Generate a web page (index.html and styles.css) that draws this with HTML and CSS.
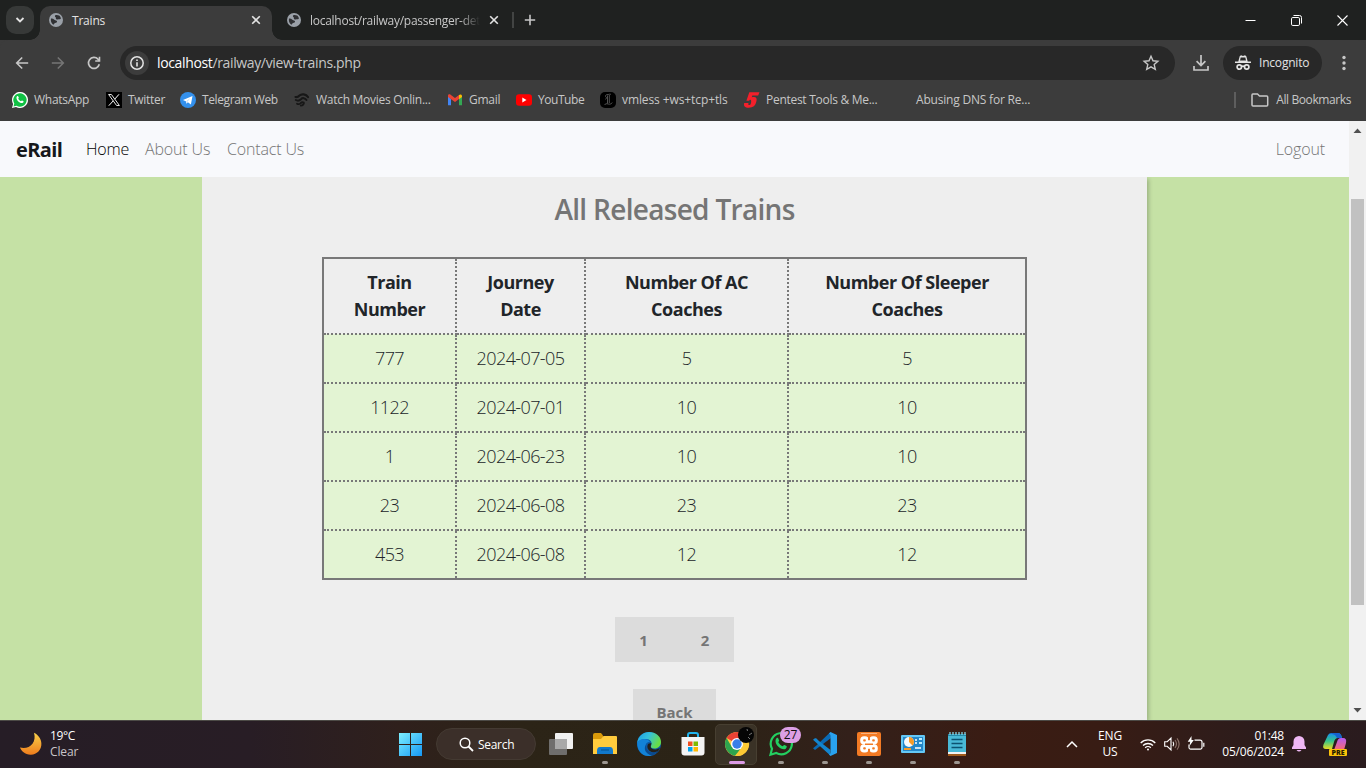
FILE: index.html
```html
<!DOCTYPE html>
<html lang="en">
<head>
<meta charset="utf-8">
<title>Trains</title>
<link rel="stylesheet" href="styles.css">
</head>
<body>
<svg width="0" height="0" class="defs">
  <symbol id="globe" viewBox="0 0 14 14"><circle cx="7" cy="7" r="7" fill="#9aa0a8"/><path d="M2 5.600c1.300-.2 2.400.3 3.400 1.200 1.200.8 2.200.4 2.600 1.500.3 1-.8 1.500-1.900 1.800-.8.300-.9 1.200-1.800 1.600C2.400 10.500 1.400 8 2 5.600zM6.300 2.200c1-.5 2.600-.4 3.800.4.900.7 1.600 1.700 1.800 2.900-.5 1-1.500.5-2.400.8-1 .2-1.600.4-2.400-.3-.6-.6.2-1.300-.5-1.700-.7-.5-1-1.600-.3-2.100z" fill="#303134"/></symbol>
  <symbol id="cross" viewBox="0 0 10 10"><path d="M1.200 1.200l7.600 7.600M8.800 1.200L1.200 8.800" stroke="currentColor" stroke-width="1.600" fill="none"/></symbol>
</svg>

<header class="tabstrip">
  <button class="tab-search"><svg width="10" height="10" viewBox="0 0 10 10"><path d="M1.500 3L5 6.500 8.500 3" fill="none" stroke="#e3e3e3" stroke-width="1.800"/></svg></button>
  <div class="tab tab-active">
    <svg width="14" height="14"><use href="#globe"/></svg><span class="tab-title">Trains</span><svg class="tab-close" width="10" height="10"><use href="#cross"/></svg>
  </div>
  <div class="tab">
    <svg width="14" height="14"><use href="#globe"/></svg><span class="tab-title tab-fade">localhost/railway/passenger-det</span><svg class="tab-close" width="10" height="10"><use href="#cross"/></svg>
  </div>
  <i class="tab-rule"></i>
  <svg class="new-tab" width="12" height="12" viewBox="0 0 12 12"><path d="M6 .8v10.400M.8 6h10.400" stroke="#c7c7c7" stroke-width="1.600"/></svg>
  <div class="window-buttons">
    <svg width="11" height="11" viewBox="0 0 11 11"><path d="M.5 5.500h10" stroke="#fff"/></svg>
    <svg width="11" height="11" viewBox="0 0 11 11" fill="none" stroke="#fff"><rect x=".5" y="2.500" width="8" height="8" rx="1.300"/><path d="M2.500.500h6a2 2 0 0 1 2 2v6"/></svg>
    <svg width="11" height="11" viewBox="0 0 11 11"><path d="M.5.500l10 10M10.500.500l-10 10" stroke="#fff" stroke-width="1.100"/></svg>
  </div>
</header>

<div class="toolbar">
  <div class="nav-buttons">
    <svg width="14" height="14" viewBox="0 0 14 14"><path d="M13.200 7H2M7.200 1.500L1.700 7l5.500 5.500" fill="none" stroke="#c7c7c7" stroke-width="1.600"/></svg>
    <svg width="14" height="14" viewBox="0 0 14 14"><path d="M.8 7H12M6.800 1.500L12.300 7l-5.500 5.500" fill="none" stroke="#757575" stroke-width="1.600"/></svg>
    <svg width="14" height="14" viewBox="0 0 14 14"><path d="M12.300 8.300A5.500 5.500 0 1 1 11 3.200l1.500 1.700" fill="none" stroke="#c7c7c7" stroke-width="1.700"/><path d="M13.300.8v5H8.200V4.300h3.500V.8z" fill="#c7c7c7"/></svg>
  </div>
  <div class="omnibox">
    <span class="site-info"><svg width="14" height="14" viewBox="0 0 14 14"><circle cx="7" cy="7" r="6.200" fill="none" stroke="#e3e3e3" stroke-width="1.500"/><path d="M7 6.200v4.200M7 3.500v1.500" stroke="#e3e3e3" stroke-width="1.600"/></svg></span>
    <span class="url"><b>localhost</b>/railway/view-trains.php</span>
    <svg class="star" width="16" height="16" viewBox="0 0 16 16"><path d="M8 1.300l2 4.500 4.900.5-3.700 3.300 1.100 4.800L8 11.900l-4.300 2.500 1.100-4.800L1.100 6.300 6 5.800z" fill="none" stroke="#c7c7c7" stroke-width="1.400"/></svg>
  </div>
  <svg class="download" width="16" height="16" viewBox="0 0 16 16" fill="none" stroke="#c7c7c7" stroke-width="1.700"><path d="M8 0v10.500M3.600 6.200L8 10.600l4.400-4.400M1 11v4h14v-4"/></svg>
  <div class="incognito"><svg width="16" height="16" viewBox="0 0 16 16"><path d="M4.700 1.300L6 .3l2 .7 2-.7 1.300 1 1.400 5.200H16V8H0V6.500h3.300z" fill="#e3e3e3"/><path d="M5.700 2.500L5 5.500h6l-.7-3z" fill="#282828"/><g fill="none" stroke="#e3e3e3" stroke-width="1.700"><circle cx="4.300" cy="12" r="2.200"/><circle cx="11.700" cy="12" r="2.200"/><path d="M6.400 11.600q1.600-1 3.200 0"/></g></svg><span>Incognito</span></div>
  <svg class="menu-dots" width="4" height="16" viewBox="0 0 4 16" fill="#c7c7c7"><circle cx="2" cy="2.500" r="1.700"/><circle cx="2" cy="8" r="1.700"/><circle cx="2" cy="13.500" r="1.700"/></svg>
</div>

<nav class="bookmarks">
  <a><svg width="16" height="16" viewBox="0 0 16 16"><path d="M0 16l1.100-4A8 8 0 1 1 4 14.900z" fill="#fff"/><path d="M1.500 14.500l.8-2.900a6.700 6.700 0 1 1 2.300 2.200z" fill="#10c044"/><path d="M5 4.300c.5-.5 1.100-.3 1.300.2l.5 1.200c.1.400-.5.800-.6 1.100.7 1.300 1.500 2 2.800 2.500.4-.2.700-.9 1.100-.8l1.400.7c.3.300-.1 1.300-.7 1.600-1.300.7-3.200-.1-4.700-1.600C4.500 7.700 3.900 5.500 5 4.300z" fill="#fff"/></svg><span>WhatsApp</span></a>
  <a><svg width="16" height="16" viewBox="0 0 16 16"><path fill="#000" d="M0 0h16v16H0z"/><path d="M2.600 2.500h2.800l8 11h-2.800z" fill="none" stroke="#fff" stroke-width=".9"/><path d="M13 2.300L8.700 7.200M7.300 8.800L2.800 13.700" stroke="#fff"/></svg><span>Twitter</span></a>
  <a><svg width="16" height="16" viewBox="0 0 16 16"><circle cx="8" cy="8" r="8" fill="#3390ec"/><path d="M3 7.900l9.500-4-1.600 8.500-3-2.100-1.700 1.500V9.500z" fill="#fff"/><path d="M6.300 9.200l4-3.200-2.800 3.800z" fill="#b8dcfa"/></svg><span>Telegram Web</span></a>
  <a><svg width="16" height="16" viewBox="0 0 16 16" fill="none" stroke="#171717" stroke-linecap="round"><path d="M14 5C12 2 7.500 1.500 5.500 3.500 4.300 4.800 3 5.200 1.500 5" stroke-width="2.200"/><path d="M12.500 8C11 5.700 8.500 5.600 7 7.200 5.500 8.700 3.500 9 1.800 8" stroke-width="2"/><path d="M9.500 10.500c-1.500-.8-2.200 0-3 .8-1 1-2.300 1-3.500.4M9.800 10.500c.5 1.500-1 3-3 3.200" stroke-width="1.800"/></svg><span>Watch Movies Onlin...</span></a>
  <a><svg width="16" height="16" viewBox="0 0 16 16"><path d="M1 4v9.300h3V7z" fill="#4285f4"/><path d="M15 4v9.300h-3V7z" fill="#34a853"/><path d="M1 3.500C1 2.200 2.700 2 3.600 2.700L8 6l4-3v4L8 10 1 5z" fill="#ea4335"/><path d="M12 3c1-1 3-.8 3 1v1l-3 2.200z" fill="#fbbc04"/></svg><span>Gmail</span></a>
  <a><svg width="16" height="16" viewBox="0 0 16 16"><rect y="2.300" width="16" height="11.500" rx="3" fill="#f00"/><path d="M6.300 5.500v5L10.500 8z" fill="#fff"/></svg><span>YouTube</span></a>
  <a><svg width="16" height="16" viewBox="0 0 16 16"><rect width="16" height="16" rx="5" fill="#000"/><path d="M11 2.500c-1-.8-2 0-3 0C6 2.400 4.500 4 6 5c1 .8.300 2-.7 2.300M7.500 3.500v8M9.300 3v8M4.500 13c2-3 4 .5 7-1.500l.7-1" fill="none" stroke="#666" stroke-width=".8"/></svg><span>vmless +ws+tcp+tls</span></a>
  <a><svg width="16" height="16" viewBox="0 0 16 16"><path d="M5.300.2h10.200l-1.300 3.300H8.300L7.800 5.300C12 4.300 13.300 6 12.400 9.300c-1 4.600-3.200 6.400-7.700 6.400-3.800 0-5.300-1.500-4.500-4.700h4.300c-.5 2 .2 2.300 1.300 2 1.400-.5 2-5.200.6-5.300-.7 0-1 .5-1.300 1H2.400z" fill="#f3202b"/></svg><span>Pentest Tools &amp; Me...</span></a>
  <a><i class="no-icon"></i><span>Abusing DNS for Re...</span></a>
  <div class="all-bookmarks"><svg width="18" height="14" viewBox="0 0 18 14"><path d="M1.800 1h4.700l2 2h7.200q1 0 1 1v8q0 1-1 1H2q-1 0-1-1V2q0-1 .8-1z" fill="none" stroke="#c7c7c7" stroke-width="1.500"/></svg><span>All Bookmarks</span></div>
</nav>

<div class="viewport">
  <div class="page">
    <nav class="navbar"><a class="brand">eRail</a><a class="current">Home</a><a class="about">About Us</a><a class="contact">Contact Us</a><a class="logout">Logout</a></nav>
    <main class="panel">
      <h1>All Released Trains</h1>
      <table>
        <colgroup><col class="c1"><col class="c2"><col class="c3"><col class="c4"></colgroup>
        <tr><th>Train<br>Number</th><th>Journey<br>Date</th><th>Number Of AC<br>Coaches</th><th>Number Of Sleeper<br>Coaches</th></tr>
        <tr><td>777</td><td>2024-07-05</td><td>5</td><td>5</td></tr>
        <tr><td>1122</td><td>2024-07-01</td><td>10</td><td>10</td></tr>
        <tr><td>1</td><td>2024-06-23</td><td>10</td><td>10</td></tr>
        <tr><td>23</td><td>2024-06-08</td><td>23</td><td>23</td></tr>
        <tr><td>453</td><td>2024-06-08</td><td>12</td><td>12</td></tr>
      </table>
      <div class="pager"><a>1</a><a>2</a></div>
      <a class="back">Back</a>
    </main>
  </div>
  <div class="scrollbar"><svg width="9" height="5" viewBox="0 0 9 5"><path d="M.5 5L4.500.500l4 4.500z" fill="#505050"/></svg><i class="thumb"></i><svg width="9" height="5" viewBox="0 0 9 5"><path d="M.5 0h8l-4 4.500z" fill="#505050"/></svg></div>
</div>

<footer class="taskbar">
  <div class="weather"><svg width="24" height="24" viewBox="0 0 24 24"><defs><linearGradient id="moon" x1="0" y1="0" x2="0" y2="1"><stop offset="0" stop-color="#f8d04a"/><stop offset="1" stop-color="#ee7c1c"/></linearGradient></defs><path d="M15 .8C26 6 24.500 22 12 22.800 6 23 2.200 19 1 15.600 10 18 18 11 15 .8z" fill="url(#moon)"/></svg><div><b>19°C</b><span>Clear</span></div></div>
  <div class="slot"><svg width="24" height="24" viewBox="0 0 24 24"><defs><linearGradient id="win" x1="0" y1="0" x2="1" y2="1"><stop offset="0" stop-color="#7df0ff"/><stop offset="1" stop-color="#1597f5"/></linearGradient></defs><path d="M1 1h11v11H1zM13 1h11v11H13zM1 13h11v11H1zM13 13h11v11H13z" fill="url(#win)"/></svg></div>
  <div class="search"><svg width="15" height="15" viewBox="0 0 15 15"><circle cx="6" cy="6" r="4.800" fill="none" stroke="#fff" stroke-width="1.500"/><path d="M9.500 9.500l4.500 4.500" stroke="#fff" stroke-width="1.800"/></svg><span>Search</span></div>
  <div class="slot"><svg width="24" height="24" viewBox="0 0 24 24"><rect x="6" y="1" width="18" height="16" rx="1" fill="#f1f1f1"/><rect y="7" width="18" height="16" rx="1" fill="#777" opacity=".9"/><path d="M6 7h12v10H6z" fill="#a9a9a9"/></svg></div>
  <div class="slot open"><svg width="24" height="24" viewBox="0 0 24 24"><path d="M0 3q0-2 2-2h6l2 2.500V10H0z" fill="#d99a0b"/><path d="M0 7h8l2.500-3H23q1 0 1 1v17H0z" fill="#ffcb3d"/><path d="M4 22v-3q0-4 3-4h10q3 0 3 4v3z" fill="#1179cc"/><path d="M8 18h8" stroke="#075a9e" stroke-width="1.300"/></svg></div>
  <div class="slot"><svg width="24" height="24" viewBox="0 0 24 24"><defs><linearGradient id="edge" x1="0" y1="0" x2="1" y2=".4"><stop offset="0" stop-color="#1b9de2"/><stop offset=".5" stop-color="#35c1dc"/><stop offset="1" stop-color="#68dc46"/></linearGradient></defs><circle cx="12" cy="12" r="12" fill="#0c59a4"/><path d="M.2 11C1 4 6 0 12 0c7 0 12 4.500 12 10 0 4-3 6.500-6.500 6.500-3 0-4-1.200-3.500-2.500 2-4-1-7-5-7C5 7 1.500 8.500.2 11z" fill="url(#edge)"/><path d="M.2 10.500C2 6.500 11 5.500 13 10c-3-.5-5 2-4.500 5.500C9 19.500 12 22 15 23.500 6 26 0 19 .2 10.500z" fill="#1283d8"/><path d="M14.500 11.500c-1 2-1.500 4 .5 5.300 2 1.300 5 1 8-1-.8 1.900-2 3.600-3 4.700-6 1-10.500-3-9.500-7 .5-2 2-2.700 4-2z" fill="#24211a"/><path d="M9 13c-.5 6 5 9.500 12 6-2 2.700-4 4-6.500 4.600C9 22 6 17 9 13z" fill="#0b4b90"/></svg></div>
  <div class="slot"><svg width="24" height="24" viewBox="0 0 24 24"><path d="M7 6V3q0-2 2-2h6q2 0 2 2v3" fill="none" stroke="#20b4ee" stroke-width="2"/><path d="M.5 5h23v15.500q0 3-3 3h-17q-3 0-3-3z" fill="#f4f4f4"/><path d="M7 9.500h4.500V14H7z" fill="#f25022"/><path d="M12.500 9.500H17V14h-4.500z" fill="#7fba00"/><path d="M7 15h4.500v4.500H7z" fill="#00a4ef"/><path d="M12.500 15H17v4.500h-4.500z" fill="#ffb900"/></svg></div>
  <div class="slot open focused"><svg width="24" height="24" viewBox="0 0 24 24"><circle cx="12" cy="12" r="12" fill="#fc4"/><path d="M12 12L1.600 6A12 12 0 0 1 22.400 6z" fill="#e94235"/><path d="M12 12l-2 11.800A12 12 0 0 1 1.600 6l5.200 9z" fill="#2da44e"/><path d="M17.200 15L10.500 23.900 6.800 15z" fill="#2da44e"/><path d="M10 23.800L17.200 15 18 6.500h4.700A12 12 0 0 1 10 23.800z" fill="#fcc934"/><circle cx="12" cy="12" r="6" fill="#fff"/><circle cx="12" cy="12" r="4.700" fill="#397fe8"/></svg><svg class="profile" width="16" height="16" viewBox="0 0 16 16"><circle cx="8" cy="8" r="8" fill="#050505"/><path d="M9 2l.5 2M11 8l3-2M10 10l2 2" stroke="#777"/></svg></div>
  <div class="slot open"><svg width="24" height="24" viewBox="0 0 24 24"><path d="M1.500 22.700l1.500-6A10.600 10.600 0 1 1 7.300 21z" fill="none" stroke="#23cf60" stroke-width="2.200"/><path d="M7.500 6.200c.6-.6 1.500-.6 1.800.2l.8 2c.2.600-.7 1.200-.9 1.700 1 2 2.400 3.200 4.400 4.200.6-.2 1.200-1.500 1.800-1.200l2.100 1c.7.500-.2 2.500-1 2.900-2.200 1-5.300-.3-7.600-2.700C6.500 11.800 5.700 8.100 7.500 6.200z" fill="#23cf60"/></svg><span class="badge">27</span></div>
  <div class="slot open"><svg width="24" height="24" viewBox="0 0 24 24"><path d="M17.500 0L3.400 13.600 0 16.300l2 1.600 4-3L18 6z" fill="#0a6ab4"/><path d="M1.900 6.200L0 7.700l17 15.500.5-5.200L6 9.100 3.200 6.200z" fill="#1385cf"/><path d="M17.500 0L24 3v18l-6.500 3-1.500-1.500q1.500-.5 1.500-2.500V4q0-2-1.500-2.500z" fill="#29a2ef"/></svg></div>
  <div class="slot open"><svg width="24" height="24" viewBox="0 0 24 24"><rect width="24" height="24" rx="2" fill="#f37a24"/><path d="M4 1.500h16" stroke="#fab27d"/><g fill="none" stroke="#fff" stroke-width="3"><rect x="4.700" y="5.700" width="5.600" height="5.300" rx="2.300"/><rect x="13.700" y="5.700" width="5.600" height="5.300" rx="2.300"/><rect x="4.700" y="13.700" width="5.600" height="5.300" rx="2.300"/><rect x="13.700" y="13.700" width="5.600" height="5.300" rx="2.300"/></g><path d="M9 9h6v7H9z" fill="#fff"/><path d="M11 4h2v4h-2zM11 17h2v4h-2zM8 11.600h8v1.500H8z" fill="#f37a24"/></svg></div>
  <div class="slot open"><svg width="24" height="24" viewBox="0 0 24 24"><rect y="3" width="24" height="18" rx="1" fill="#64c8f5"/><rect x="2" y="5" width="20" height="14" fill="#2487c8"/><circle cx="8" cy="10" r="5" fill="#f6f9fb"/><path d="M8 10V5a5 5 0 0 1 3.500 8.500z" fill="#f89b25"/><path d="M14 8h2M14 11h2M14 16h6" stroke="#fff" stroke-width="1.300"/><path d="M18 7h3M18 11h3" stroke="#b9edff" stroke-width="2"/><path d="M3 17h7" stroke="#f89b25" stroke-width="2"/></svg></div>
  <div class="slot open"><svg width="24" height="24" viewBox="0 0 24 24"><path d="M3 2h18v20H3z" fill="#49b9d6"/><path d="M3 2h18v2H3z" fill="#2689a8"/><path d="M3 20h18v2H3z" fill="#f2f2f2"/><path d="M3 22h18v2H3z" fill="#9e5a1c"/><path d="M5 0v3M8 0v3M11 0v3M14 0v3M17 0v3M20 0v3" stroke="#8de3f5" stroke-width="1.200"/><path d="M6.500 7.500h11M6.500 11.500h11M6.500 15.500h11" stroke="#0c5270" stroke-width="1.500"/></svg></div>
  <div class="tray">
    <svg width="12" height="8" viewBox="0 0 12 8"><path d="M1 7l5-5 5 5" fill="none" stroke="#fff" stroke-width="1.500"/></svg>
    <div class="lang"><span>ENG</span><span>US</span></div>
    <svg class="wifi" width="16" height="13" viewBox="0 0 16 13" fill="none" stroke="#fff" stroke-width="1.300"><path d="M.7 5a10.300 10.300 0 0 1 14.600 0M3 7.500a7.200 7.200 0 0 1 10 0M5.200 9.800a4 4 0 0 1 5.600 0"/><circle cx="8" cy="11.500" r="1" fill="#fff" stroke="none"/></svg>
    <svg class="volume" width="16" height="14" viewBox="0 0 16 14" fill="none" stroke="#fff" stroke-width="1.100"><path d="M.7 4.700h2.500l3.800-3.600v11.800L3.200 9.300H.7zM9 4.800q1.500 2.200 0 4.400"/><path d="M11 3q3 4 0 8M13 1.300q4.300 5.700 0 11.400" stroke="#8b7168"/></svg>
    <svg class="battery" width="17" height="14" viewBox="0 0 17 14" fill="none" stroke="#fff" stroke-width="1.200"><path d="M6.500 3.100H12q2 0 2 2v5.500q0 1.500-1.500 1.500H2.500Q1 12.100 1 10.600V7.500M15.800 5.700v4"/><path d="M3.500-1L-.3 4.700h2.500L1.500 9l4.300-6H3.500z" fill="#fff" stroke="none"/></svg>
    <div class="clock"><span>01:48</span><span>05/06/2024</span></div>
    <svg class="bell" width="14" height="16" viewBox="0 0 14 16" fill="#efb8f4"><path d="M0 13v-1.500L1.500 9V5.500a5.500 5.500 0 0 1 11 0V9l1.500 2.500V13zM4.500 14h5q-2.500 3-5 0z"/></svg>
    <div class="copilot"><svg width="24" height="24" viewBox="0 0 24 24"><defs><linearGradient id="cpa" x1="0" y1="0" x2="0" y2="1"><stop offset="0" stop-color="#168cf0"/><stop offset=".5" stop-color="#35c48a"/><stop offset="1" stop-color="#e8db23"/></linearGradient><linearGradient id="cpb" x1="0" y1="0" x2="0" y2="1"><stop offset="0" stop-color="#b45cf0"/><stop offset="1" stop-color="#fb6a70"/></linearGradient></defs><path d="M5 3q1-2 4-2h6q3 0 4 5h-4q-3 0-4 4l-2 7H3Q-1 17 .5 12.500z" fill="url(#cpa)"/><path d="M7 1h8q3 0 4 5h-5L12 3z" fill="#1661cf"/><path d="M14 10q1-4 4-4h2q4 0 3 5l-2 7H11z" fill="url(#cpb)"/></svg><span class="pre">PRE</span></div>
  </div>
</footer>
</body>
</html>
```
FILE: styles.css
```css
* { box-sizing: border-box; }
body { margin: 0; width: 1366px; height: 768px; overflow: hidden; display: flex; flex-direction: column; font-family: "Open Sans", "Noto Sans", sans-serif; font-size: 12px; letter-spacing: -.2px; background: #3c3c3c; white-space: nowrap; }
svg { display: block; flex: none; overflow: visible; }
.defs { display: none; }

.tabstrip { height: 40px; flex: none; display: flex; align-items: center; background: #1f2120; padding-left: 6px; color: #e3e3e3; }
.tab-search { width: 28px; height: 28px; border: 0; border-radius: 10px; background: #373938; display: flex; align-items: center; justify-content: center; padding: 0; margin-right: 6px; }
.tab { width: 232px; height: 34px; align-self: flex-end; border-radius: 10px 10px 0 0; display: flex; align-items: center; padding: 0 11px 6px 9px; margin-right: 6px; }
.tab-active { background: #3c3c3c; position: relative; }
.tab-active::before, .tab-active::after { content: ""; position: absolute; bottom: 0; width: 10px; height: 10px; }
.tab-active::before { left: -10px; background: radial-gradient(circle at 0 0, transparent 9.5px, #3c3c3c 10px); }
.tab-active::after { right: -10px; background: radial-gradient(circle at 100% 0, transparent 9.5px, #3c3c3c 10px); }
.tab-title { margin-left: 9px; flex: 1; }
.tab-fade { color: #c7c7c7; letter-spacing: -.27px; -webkit-mask-image: linear-gradient(90deg, #000 150px, transparent 170px); mask-image: linear-gradient(90deg, #000 150px, transparent 170px); }
.tab + .tab { padding-right: 5px; width: 226px; }
.tab-rule { width: 2px; height: 16px; background: #424443; margin-left: 2px; }
.new-tab { margin-left: 10px; }
.window-buttons { margin-left: auto; margin-right: 18px; display: flex; gap: 35px; }

.toolbar { height: 46px; flex: none; display: flex; align-items: center; background: #3c3c3c; border-radius: 8px 8px 0 0; padding-left: 15px; }
.nav-buttons { display: flex; gap: 22px; width: 105px; }
.omnibox { width: 1055px; height: 34px; border-radius: 17px; background: #282828; display: flex; align-items: center; padding: 0 16px 0 5px; }
.site-info { width: 24px; height: 24px; border-radius: 12px; background: #3c3c3c; display: flex; align-items: center; justify-content: center; }
.url { margin-left: 8px; color: #c7c7c7; font-size: 14px; letter-spacing: -.36px; padding-bottom: 1px; }
.url b { color: #fff; font-weight: 400; }
.star { margin-left: auto; }
.download { margin-left: 18px; }
.incognito { width: 99px; height: 34px; margin-left: 14px; border-radius: 17px; background: #282828; display: flex; align-items: center; gap: 8px; padding-left: 12px; color: #e3e3e3; font-weight: 500; }
.incognito span { padding-bottom: 1px; }
.menu-dots { margin-left: 20px; }

.bookmarks { height: 35px; flex: none; display: flex; padding: 0 15px 7px 12px; align-items: center; color: #c7c7c7; letter-spacing: -.28px; }
.bookmarks span { padding-bottom: 2px; }
.bookmarks a { display: flex; gap: 6px; align-items: center; }
.bookmarks a:nth-child(1) { width: 94px; }
.bookmarks a:nth-child(2) { width: 74px; }
.bookmarks a:nth-child(3) { width: 114px; letter-spacing: -.4px; }
.bookmarks a:nth-child(4) { width: 153px; }
.bookmarks a:nth-child(5) { width: 69px; }
.bookmarks a:nth-child(6) { width: 84px; letter-spacing: -.45px; }
.bookmarks a:nth-child(7) { width: 144px; letter-spacing: -.1px; }
.bookmarks a:nth-child(8) { width: 150px; }
.bookmarks a:nth-child(9) { letter-spacing: -.2px; }
.no-icon { width: 16px; }
.all-bookmarks { margin-left: auto; display: flex; gap: 7px; align-items: center; border-left: 2px solid #5e5e5e; padding-left: 15px; height: 16px; letter-spacing: -.4px; }

.viewport { height: 599px; flex: none; display: flex; overflow: hidden; }
.page { width: 1349px; background: #c5e1a5; }
.navbar { height: 56px; background: #f8f9fc; display: flex; align-items: center; padding: 0 24px 0 16px; font-size: 16px; font-weight: 300; color: #757575; letter-spacing: -.15px; position: relative; z-index: 1; }
.brand { width: 70px; font-size: 20px; font-weight: 700; color: #16181b; letter-spacing: -.6px; }
.current { width: 59px; color: #000; }
.about { width: 82px; }
.logout { margin-left: auto; }
.panel { width: 945px; height: 543px; margin-left: 202px; background: #eee; box-shadow: 2px 2px 4px rgba(0, 0, 0, .2); clip-path: inset(0 -10px 0 0); display: flex; flex-direction: column; align-items: center; color: #757575; }
h1 { margin: 13px 0 0; font-size: 28px; line-height: 38px; font-weight: 550; letter-spacing: -.7px; }
table { width: 705px; margin-top: 29px; border-collapse: collapse; table-layout: fixed; border: 2px solid #787878; text-align: center; }
.c1 { width: 133px; } .c2 { width: 129px; } .c3 { width: 203px; } .c4 { width: 238px; }
th, td { border: 2px dotted #787878; padding: 0; height: 49px; font-size: 18px; line-height: 27px; }
th { height: 76px; color: #212529; font-weight: 680; letter-spacing: -.48px; }
td { color: #212529; font-weight: 300; background: #e3f4d3; letter-spacing: -.6px; }
.pager { display: flex; margin-top: 37px; background: #dcdcdc; }
.pager a { width: 57px; height: 45px; line-height: 46px; text-align: center; font-size: 15px; font-weight: 700; }
.pager a + a { width: 62px; padding-left: 4px; }
.back { margin-top: 27px; width: 83px; height: 31px; line-height: 46px; background: #dcdcdc; text-align: center; font-size: 15px; font-weight: 700; letter-spacing: -.05px; }
.scrollbar { width: 17px; background: #f1f1f1; display: flex; flex-direction: column; align-items: center; padding: 7px 0; }
.thumb { width: 13px; height: 406px; margin: 66px 0 auto; background: #c1c1c1; }

.taskbar { height: 48px; flex: none; display: flex; align-items: center; padding-bottom: 1px; border-top: 1px solid #4c4a46; color: #fff; letter-spacing: -.1px; background: linear-gradient(90deg, #261d26 0, #281d25 250px, #2f201c 400px, #2c2417 520px, #2b2316 710px, #33201a 850px, #3a1c13 1000px, #381c14 1100px, #2c1c1c 1260px, #2a1b1e 100%); }
.weather { width: 388px; padding-left: 19px; display: flex; gap: 7px; line-height: 16px; align-items: center; letter-spacing: -.4px; }
.weather b, .weather span { display: block; font-weight: 400; }
.weather span { color: #c9c5c9; letter-spacing: -.15px; }
.slot { width: 44px; height: 46px; display: flex; align-items: center; justify-content: center; position: relative; }
.search { width: 100px; height: 32px; margin: 0 3px 0 4px; border-radius: 16px; background: #3b2f29; border: 1px solid #443a32; display: flex; align-items: center; gap: 4px; padding-left: 22px; letter-spacing: -.3px; }
.open::after { content: ""; position: absolute; left: 19px; bottom: 3px; width: 6px; height: 3px; border-radius: 2px; background: #9c9690; }
.focused::before { content: ""; position: absolute; left: 0; top: 3px; width: 40px; height: 39px; border-radius: 5px; background: #3a3226; border: 1px solid #473f31; }
.focused svg { position: relative; }
.focused.open::after { left: 14px; width: 16px; background: #dc9be6; }
.focused .profile { position: absolute; left: 23px; top: 6px; }
.badge { position: absolute; left: 21px; top: 6px; width: 21px; height: 16px; border-radius: 8px; background: #dc9fe5; color: #111; line-height: 16px; text-align: center; }
.tray { margin-left: auto; display: flex; align-items: center; padding-right: 19px; }
.lang { width: 40px; margin-left: 12px; text-align: center; line-height: 16px; }
.lang span, .clock span { display: block; }
.wifi { margin-left: 10px; }
.volume { margin-left: 8px; }
.battery { margin-left: 8px; }
.clock { width: 79px; text-align: right; line-height: 16px; letter-spacing: -.2px; }
.bell { margin-left: 8px; }
.copilot { margin-left: 17px; position: relative; }
.pre { position: absolute; right: 0; bottom: 0; width: 18px; height: 7px; border-radius: 1px; background: #fbc30a; color: #251b00; font-size: 7px; font-weight: 800; line-height: 7px; text-align: center; letter-spacing: 0; }
```
